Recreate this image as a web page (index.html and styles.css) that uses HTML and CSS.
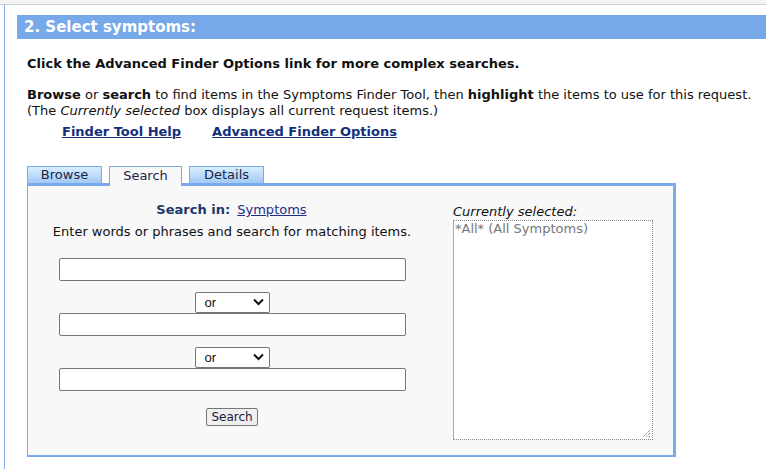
FILE: index.html
```html
<!DOCTYPE html>
<html>
<head>
<meta charset="utf-8">
<link rel="stylesheet" href="styles.css">
</head>
<body>
<div class="topbar"></div>
<div class="page">
  <div class="header">2. Select symptoms:</div>
  <div class="content">
    <p class="lead">Click the Advanced Finder Options link for more complex searches.</p>
    <p class="intro"><b>Browse</b> or <b>search</b> to find items in the Symptoms Finder Tool, then <b>highlight</b> the items to use for this request.<br>(The <i>Currently selected</i> box displays all current request items.)</p>
    <div class="links"><a href="#">Finder Tool Help</a><a href="#">Advanced Finder Options</a></div>
    <div class="tabs">
      <span class="tab">Browse</span>
      <span class="tab active">Search</span>
      <span class="tab">Details</span>
    </div>
    <div class="panel">
      <div class="left">
        <div class="searchin"><b>Search in:</b> <a href="#">Symptoms</a></div>
        <div class="hint">Enter words or phrases and search for matching items.</div>
        <input class="field first" type="text">
        <div class="sel"><div class="select"><span>or</span><svg width="11" height="8" viewBox="0 0 11 8"><path d="M1 1.5 L5.5 6 L10 1.5" fill="none" stroke="#111" stroke-width="2"/></svg></div></div>
        <input class="field" type="text">
        <div class="sel"><div class="select"><span>or</span><svg width="11" height="8" viewBox="0 0 11 8"><path d="M1 1.5 L5.5 6 L10 1.5" fill="none" stroke="#111" stroke-width="2"/></svg></div></div>
        <input class="field" type="text">
        <div class="btnrow"><button class="btn">Search</button></div>
      </div>
      <div class="right">
        <div class="cslabel">Currently selected:</div>
        <div class="listbox">*All* (All Symptoms)<svg class="grip" width="10" height="10" viewBox="0 0 10 10"><path d="M9 2 L2 9 M9 5 L5 9 M9 8 L8 9" stroke="#555" stroke-width="1" stroke-dasharray="1 1"/></svg></div>
      </div>
    </div>
  </div>
</div>
</body>
</html>
```
FILE: styles.css
```css
* { box-sizing: border-box; }
html, body { margin: 0; padding: 0; }
body {
  font-family: "DejaVu Sans", Verdana, sans-serif;
  font-size: 13px;
  color: #111;
  background: #fcfdff;
  height: 469px;
  overflow: hidden;
}
.topbar {
  height: 5px;
  background: #f4f4f4;
  border-bottom: 1px solid #cfcfcf;
}
.page {
  margin-left: 4px;
  border-left: 1px solid #7faae6;
  padding: 10px 0 0 12px;
  height: 464px;
  background: #fff;
}
.header {
  background: #77a8ea;
  color: #fff;
  font-weight: bold;
  font-size: 15px;
  height: 24px;
  line-height: 24px;
  padding-left: 7px;
}
.content {
  padding-left: 10px;
}
p { margin: 0; }
.lead {
  font-weight: bold;
  margin-top: 17px;
  line-height: 16px;
}
.intro {
  margin-top: 15px;
  line-height: 16px;
}
.links {
  margin-top: 5px;
  padding-left: 35px;
  display: flex;
  gap: 31px;
  line-height: 16px;
}
.links a {
  color: #13307a;
  font-weight: bold;
}
.tabs {
  margin-top: 26px;
  display: flex;
  gap: 7px;
  height: 17px;
  align-items: flex-end;
  position: relative;
  z-index: 1;
}
.tab {
  display: block;
  width: 75px;
  height: 17px;
  line-height: 16px;
  text-align: center;
  color: #1a2448;
  border: 1px solid #7aa8e6;
  border-bottom: none;
  background: linear-gradient(#d8eefe, #a3c9f6);
}
.tab.active {
  width: 73px;
  height: 20px;
  margin-bottom: -3px;
  background: #f8f8f8;
  line-height: 18px;
}
.panel {
  width: 649px;
  height: 274px;
  border-style: solid;
  border-color: #7aa9ee;
  border-width: 3px 3px 2px 1px;
  background: #f8f8f8;
  display: flex;
}
.left {
  width: 408px;
  display: flex;
  flex-direction: column;
  align-items: center;
  padding-top: 16px;
}
.searchin {
  color: #1d376b;
  line-height: 16px;
  margin-left: -1px;
}
.searchin b { margin-right: 3px; }
.searchin a { color: #1d2f88; }
.hint {
  margin-top: 6px;
  line-height: 16px;
}
.field {
  width: 347px;
  height: 23px;
  border: 1px solid #767676;
  border-radius: 2px;
  background: #fff;
  margin: 0;
  display: block;
}
.field.first { margin-top: 18px; }
.sel {
  margin-top: 11px;
  height: 21px;
}
.select {
  width: 75px;
  height: 21px;
  border: 1px solid #767676;
  border-radius: 2px;
  background: #fff;
  display: flex;
  align-items: center;
  justify-content: space-between;
  padding: 0 5px 1px 9px;
  font-family: "Liberation Sans", Arial, sans-serif;
  font-size: 13px;
  color: #111;
}
.btnrow { margin-top: 17px; }
.btn {
  font-family: "DejaVu Sans", Verdana, sans-serif;
  font-size: 12px;
  color: #1a1a40;
  width: 52px;
  height: 18px;
  padding: 0;
  border: 1px solid #767676;
  border-radius: 2px;
  background: #efefef;
  line-height: 14px;
}
.right {
  padding-left: 17px;
  padding-top: 18px;
}
.cslabel {
  font-style: italic;
  line-height: 16px;
  margin-top: 0;
}
.listbox {
  position: relative;
  width: 200px;
  height: 220px;
  border: 1px dotted #888;
  border-left: 1px solid #aaa;
  border-top: 1px dotted #888;
  background: #fff;
  color: #777;
  line-height: 16px;
  padding: 0 1px;
}
.grip {
  position: absolute;
  right: 1px;
  bottom: 1px;
}
```
